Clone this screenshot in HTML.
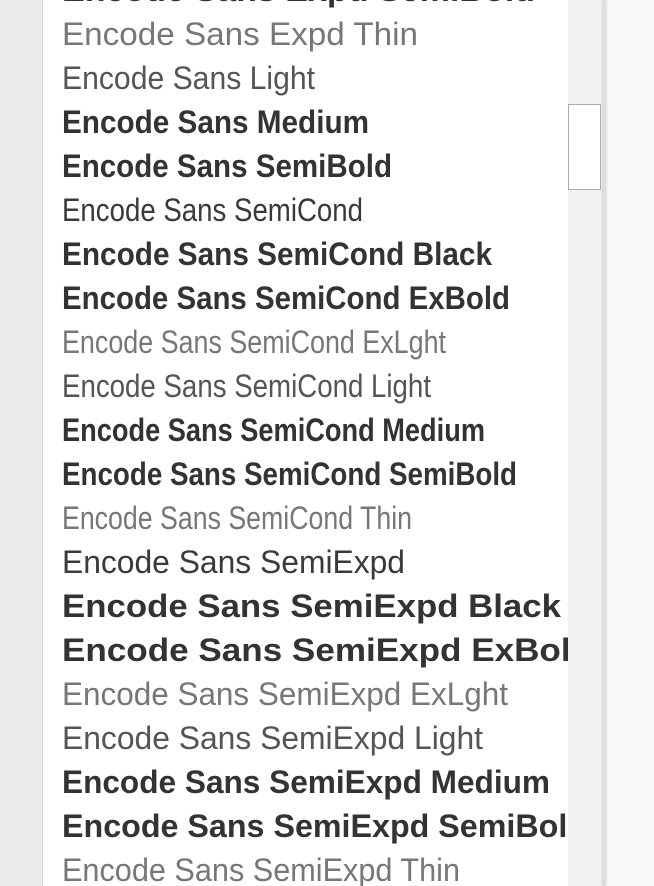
<!DOCTYPE html>
<html><head><meta charset="utf-8"><style>
html,body{margin:0;padding:0;width:654px;height:886px;overflow:hidden;background:#fafafa;}
#l{position:absolute;left:0;top:0;width:43px;height:886px;background:#ebebeb;border-right:1px solid #d8d8d8;box-sizing:border-box}
#p{position:absolute;left:43px;top:0;width:525px;height:886px;background:#fff;overflow:hidden}
#t{position:absolute;left:568px;top:0;width:35px;height:886px;background:#f2f2f2}
#th{position:absolute;left:568px;top:104px;width:33px;height:86px;border:1px solid #aaa;box-sizing:border-box;background:#fff}
#b{position:absolute;left:602px;top:0;width:3px;height:886px;background:#ddd;box-shadow:1px 0 3px #ccc}
text{font-family:"Liberation Sans",sans-serif;font-size:32px}
.n{fill:#3a3a3a}.th{fill:#777}.x{fill:#555}.b{fill:#333;font-weight:bold}
</style></head><body>
<div id="l"></div>
<div id="p">
<svg width="525" height="886" xmlns="http://www.w3.org/2000/svg">
<g transform="translate(-43,0)" lengthAdjust="spacingAndGlyphs">
<text class="b" x="62" y="1" textLength="473" lengthAdjust="spacingAndGlyphs">Encode Sans Expd SemiBold</text>
<text class="th" x="62" y="45" textLength="356" lengthAdjust="spacingAndGlyphs">Encode Sans Expd Thin</text>
<text class="x" x="62" y="89" textLength="253" lengthAdjust="spacingAndGlyphs">Encode Sans Light</text>
<text class="b" x="62" y="133" textLength="307" lengthAdjust="spacingAndGlyphs">Encode Sans Medium</text>
<text class="b" x="62" y="177" textLength="330" lengthAdjust="spacingAndGlyphs">Encode Sans SemiBold</text>
<text class="n" x="62" y="221" textLength="301" lengthAdjust="spacingAndGlyphs">Encode Sans SemiCond</text>
<text class="b" x="62" y="265" textLength="430" lengthAdjust="spacingAndGlyphs">Encode Sans SemiCond Black</text>
<text class="b" x="62" y="309" textLength="448" lengthAdjust="spacingAndGlyphs">Encode Sans SemiCond ExBold</text>
<text class="th" x="62" y="353" textLength="384" lengthAdjust="spacingAndGlyphs">Encode Sans SemiCond ExLght</text>
<text class="x" x="62" y="397" textLength="369" lengthAdjust="spacingAndGlyphs">Encode Sans SemiCond Light</text>
<text class="b" x="62" y="441" textLength="423" lengthAdjust="spacingAndGlyphs">Encode Sans SemiCond Medium</text>
<text class="b" x="62" y="485" textLength="455" lengthAdjust="spacingAndGlyphs">Encode Sans SemiCond SemiBold</text>
<text class="th" x="62" y="529" textLength="350" lengthAdjust="spacingAndGlyphs">Encode Sans SemiCond Thin</text>
<text class="n" x="62" y="573" textLength="343" lengthAdjust="spacingAndGlyphs">Encode Sans SemiExpd</text>
<text class="b" x="62" y="617" textLength="499" lengthAdjust="spacingAndGlyphs">Encode Sans SemiExpd Black</text>
<text class="b" x="62" y="661" textLength="530" lengthAdjust="spacingAndGlyphs">Encode Sans SemiExpd ExBold</text>
<text class="th" x="62" y="705" textLength="446" lengthAdjust="spacingAndGlyphs">Encode Sans SemiExpd ExLght</text>
<text class="x" x="62" y="749" textLength="421" lengthAdjust="spacingAndGlyphs">Encode Sans SemiExpd Light</text>
<text class="b" x="62" y="793" textLength="488" lengthAdjust="spacingAndGlyphs">Encode Sans SemiExpd Medium</text>
<text class="b" x="62" y="837" textLength="525" lengthAdjust="spacingAndGlyphs">Encode Sans SemiExpd SemiBold</text>
<text class="th" x="62" y="881" textLength="398" lengthAdjust="spacingAndGlyphs">Encode Sans SemiExpd Thin</text>
</g></svg>
</div>
<div id="t"></div><div id="th"></div><div id="b"></div>
</body></html>
